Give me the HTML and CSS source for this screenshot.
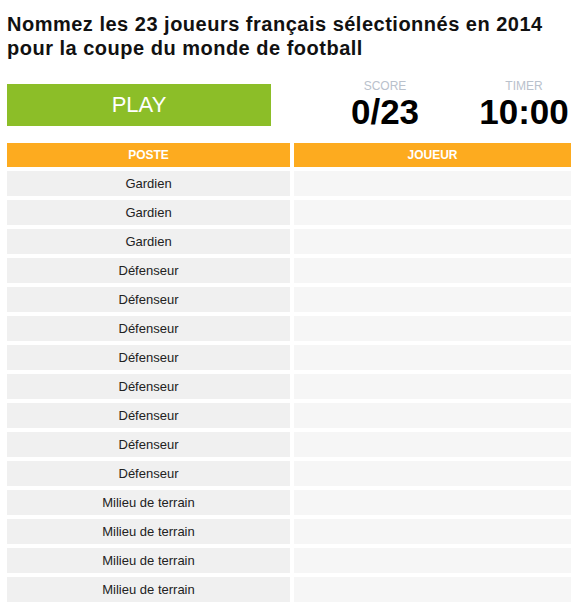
FILE: index.html
```html
<!DOCTYPE html>
<html lang="fr">
<head>
<meta charset="utf-8">
<title>Quiz</title>
<link rel="stylesheet" href="styles.css">
</head>
<body>
<div class="page">
  <h1 class="title">Nommez les 23 joueurs français sélectionnés en 2014 pour la coupe du monde de football</h1>
  <div class="controls">
    <button class="play">PLAY</button>
    <div class="stats">
      <div class="stat">
        <div class="stat-label">SCORE</div>
        <div class="stat-value">0/23</div>
      </div>
      <div class="stat">
        <div class="stat-label">TIMER</div>
        <div class="stat-value">10:00</div>
      </div>
    </div>
  </div>
  <div class="grid">
    <div class="head">POSTE</div><div class="head">JOUEUR</div>
    <div class="pos">Gardien</div><div class="ans"></div>
    <div class="pos">Gardien</div><div class="ans"></div>
    <div class="pos">Gardien</div><div class="ans"></div>
    <div class="pos">Défenseur</div><div class="ans"></div>
    <div class="pos">Défenseur</div><div class="ans"></div>
    <div class="pos">Défenseur</div><div class="ans"></div>
    <div class="pos">Défenseur</div><div class="ans"></div>
    <div class="pos">Défenseur</div><div class="ans"></div>
    <div class="pos">Défenseur</div><div class="ans"></div>
    <div class="pos">Défenseur</div><div class="ans"></div>
    <div class="pos">Défenseur</div><div class="ans"></div>
    <div class="pos">Milieu de terrain</div><div class="ans"></div>
    <div class="pos">Milieu de terrain</div><div class="ans"></div>
    <div class="pos">Milieu de terrain</div><div class="ans"></div>
    <div class="pos">Milieu de terrain</div><div class="ans"></div>
  </div>
</div>
</body>
</html>
```
FILE: styles.css
```css
html, body {
  margin: 0;
  padding: 0;
  background: #ffffff;
  overflow: hidden;
}
body {
  font-family: "Liberation Sans", Arial, sans-serif;
  color: #222;
}
.page {
  padding: 12px 7px 0 7px;
}
.title {
  margin: 0;
  font-size: 20px;
  line-height: 24px;
  letter-spacing: 0.5px;
  font-weight: bold;
  color: #111;
}
.controls {
  display: flex;
  align-items: flex-start;
  margin-top: 20px;
}
.play {
  margin-top: 4px;
  width: 264px;
  height: 42px;
  border: none;
  padding: 0;
  background: #8cbe28;
  color: #fff;
  font-family: "Liberation Sans", Arial, sans-serif;
  font-size: 22px;
  display: flex;
  align-items: center;
  justify-content: center;
}
.stats {
  margin-left: auto;
  display: flex;
  gap: 45px;
}
.stat {
  width: 94px;
  text-align: center;
}
.stat-label {
  font-size: 12px;
  line-height: 12px;
  color: #b9c1cc;
}
.stat-value {
  font-size: 35px;
  line-height: 40px;
  font-weight: bold;
  color: #000;
}
.grid {
  margin-top: 11px;
  display: grid;
  grid-template-columns: 283fr 277fr;
  grid-template-rows: 24px;
  grid-auto-rows: 25px;
  gap: 4px;
}
.head {
  background: #fdab1f;
  color: #fff;
  font-size: 12px;
  font-weight: bold;
  display: flex;
  align-items: center;
  justify-content: center;
}
.pos {
  background: #f0f0f0;
  font-size: 13px;
  color: #222;
  display: flex;
  align-items: center;
  justify-content: center;
}
.ans {
  background: #f6f6f6;
}
```
